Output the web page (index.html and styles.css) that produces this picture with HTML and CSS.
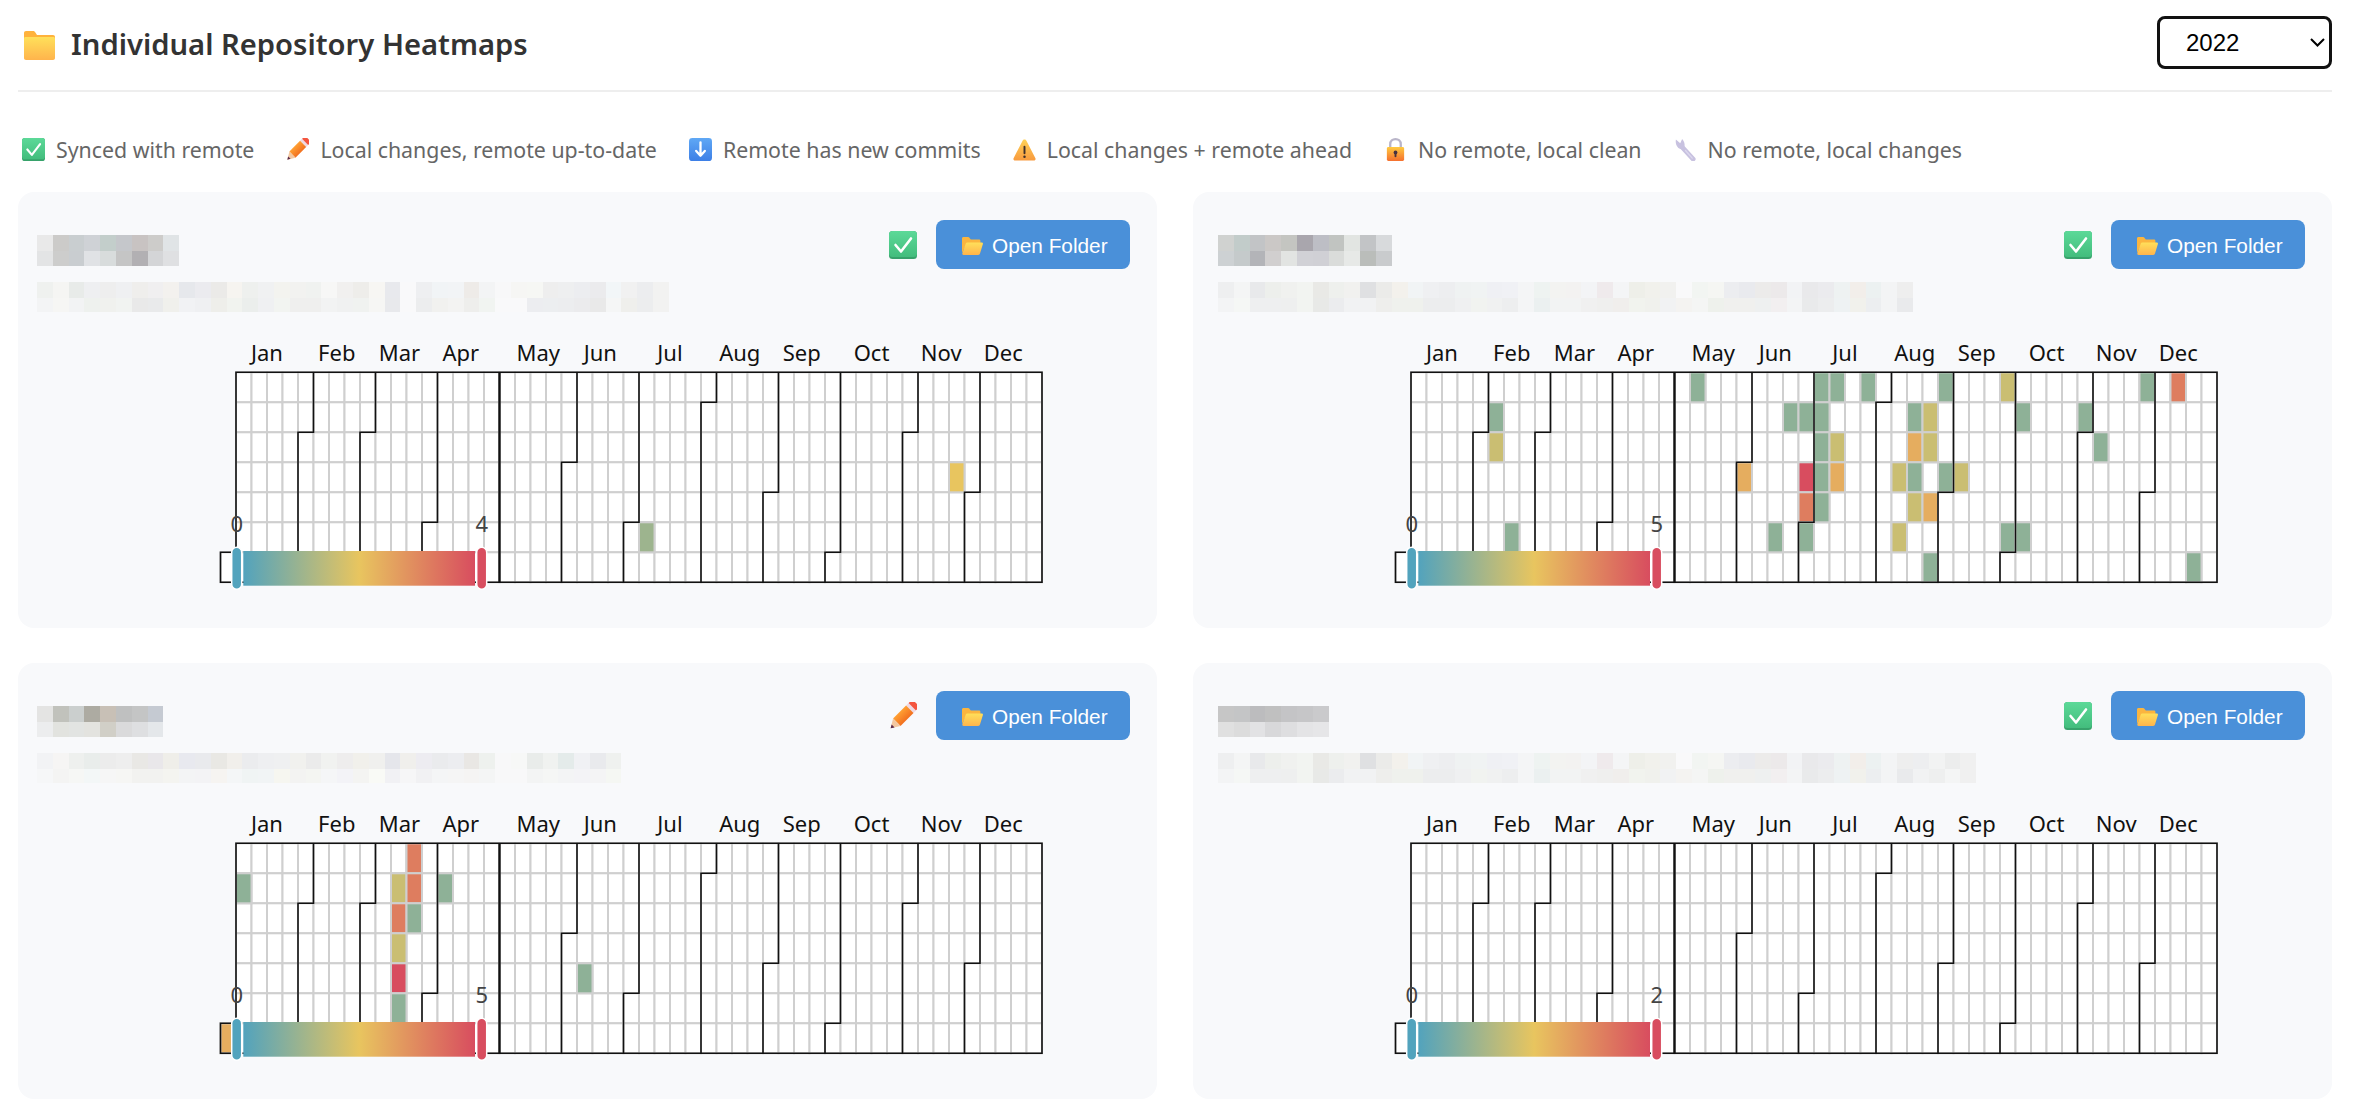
FILE: index.html
```html
<!DOCTYPE html>
<html lang="en">
<head>
    <meta charset="UTF-8">
    <meta name="viewport" content="width=device-width, initial-scale=1.0">
    <title>Individual Repository Heatmaps</title>
    <link rel="stylesheet" href="styles.css">
</head>
<body>
    <svg class="sprite" xmlns="http://www.w3.org/2000/svg">
        <defs>
            <linearGradient id="g-green" x1="0" y1="0" x2="0" y2="1"><stop offset="0" stop-color="#5cd998"/><stop offset="1" stop-color="#43bd7d"/></linearGradient>
            <linearGradient id="g-blue" x1="0" y1="0" x2="0" y2="1"><stop offset="0" stop-color="#5fa8f5"/><stop offset="1" stop-color="#3d7fe6"/></linearGradient>
            <linearGradient id="g-amber" x1="0" y1="0" x2="0" y2="1"><stop offset="0" stop-color="#ffd257"/><stop offset="1" stop-color="#f89a3e"/></linearGradient>
            <linearGradient id="g-lock" x1="0" y1="0" x2="0" y2="1"><stop offset="0" stop-color="#ffc93f"/><stop offset="1" stop-color="#f5702f"/></linearGradient>
            <linearGradient id="g-orange" x1="0" y1="0" x2="1" y2="0"><stop offset="0" stop-color="#ffa033"/><stop offset="1" stop-color="#f2701f"/></linearGradient>
            <linearGradient id="g-folder" x1="0" y1="0" x2="0" y2="1"><stop offset="0" stop-color="#ffe05a"/><stop offset="1" stop-color="#ffb44c"/></linearGradient>
            <linearGradient id="g-scale" x1="0" y1="0" x2="1" y2="0"><stop offset="0" stop-color="#52a3bd"/><stop offset="0.5" stop-color="#e8c55f"/><stop offset="1" stop-color="#d84d5f"/></linearGradient>
        </defs>
        <symbol id="i-check" viewBox="0 0 28 28">
            <rect width="28" height="28" rx="3.5" fill="#37a26b"/>
            <rect width="28" height="26" rx="3.5" fill="url(#g-green)"/>
            <path d="M6.5 14 L12 20.5 L22 7.5" fill="none" stroke="#fff" stroke-width="2.6" stroke-linecap="round" stroke-linejoin="round"/>
        </symbol>
        <symbol id="i-pencil" viewBox="0 0 32 32">
            <g transform="rotate(45 16 16)">
                <rect x="10" y="-5" width="12" height="7" rx="2" fill="#f4553f"/>
                <rect x="10" y="1" width="12" height="4" fill="#efd9e2"/>
                <rect x="10" y="5" width="12" height="21" fill="url(#g-orange)"/>
                <path d="M10 26 H22 L16 36 Z" fill="#f3c7a0"/>
                <path d="M13.6 32 H18.4 L16 36 Z" fill="#5a2a4a"/>
            </g>
        </symbol>
        <symbol id="i-down" viewBox="0 0 24 24">
            <rect width="24" height="24" rx="3.5" fill="url(#g-blue)"/>
            <path d="M12 4.5 V18 M7.5 13.5 L12 18.5 L16.5 13.5" fill="none" stroke="#fff" stroke-width="2.4" stroke-linecap="round" stroke-linejoin="round"/>
        </symbol>
        <symbol id="i-warn" viewBox="0 0 24 24">
            <path d="M12 1.5 C13 1.5 13.6 2 14 2.8 L23.4 21 C24 22.3 23.2 23.5 21.8 23.5 H2.2 C.8 23.5 0 22.3 .6 21 L10 2.8 C10.4 2 11 1.5 12 1.5 Z" fill="url(#g-amber)"/>
            <rect x="11" y="8" width="2" height="9" rx="1" fill="#40302a"/>
            <circle cx="12" cy="19.6" r="1.3" fill="#40302a"/>
        </symbol>
        <symbol id="i-lock" viewBox="0 0 20 24">
            <path d="M4.5 11 V6.5 C4.5 3 7 1.2 10 1.2 C13 1.2 15.5 3 15.5 6.5 V11" fill="none" stroke="#b9b5c9" stroke-width="2.4"/>
            <rect x="1" y="9.5" width="18" height="14.5" rx="1.5" fill="url(#g-lock)"/>
            <circle cx="10" cy="15" r="2" fill="#4a3340"/>
            <rect x="9" y="15" width="2" height="5" rx="1" fill="#4a3340"/>
        </symbol>
        <symbol id="i-wrench" viewBox="0 0 24 24">
            <path d="M9 10 L20 22" fill="none" stroke="#c8c2e0" stroke-width="5" stroke-linecap="round"/>
            <path d="M2 1.5 L6.5 5.5 L8.5 1 C10.5 3 11.8 6.5 10.8 9.5 C10 12 7.5 12 5.5 11 C3 9.5 1.2 5.5 2 1.5 Z" fill="#c8c2e0"/>
            <path d="M12 13 L19 21" fill="none" stroke="#dcd8ee" stroke-width="1.4" stroke-linecap="round"/>
        </symbol>
        <symbol id="i-folder" viewBox="0 0 31 29">
            <path d="M0 2 C0 .8 .8 0 2 0 H9 C10 0 10.6 .4 11.2 1.2 L13 4 H29 C30.2 4 31 4.8 31 6 V12 H0 Z" fill="#ffb23c"/>
            <path d="M0 7.5 C0 6.6 .6 6 1.5 6 H29.5 C30.4 6 31 6.6 31 7.5 V27 C31 28.2 30.2 29 29 29 H2 C.8 29 0 28.2 0 27 Z" fill="url(#g-folder)"/>
        </symbol>
        <symbol id="i-open" viewBox="0 0 21 18">
            <path d="M0 1.5 C0 .6 .6 0 1.5 0 H6 C6.8 0 7.2 .3 7.6 .9 L8.8 2.6 H17 C17.9 2.6 18.4 3.2 18.4 4 V8 H4 L0 16 Z" fill="#fbb53f"/>
            <path d="M3.8 6.4 C4 5.8 4.5 5.4 5.2 5.4 H19.6 C20.6 5.4 21.2 6.2 20.9 7.1 L18 16.6 C17.8 17.4 17.2 18 16.2 18 H1.5 C.6 18 0 17.2 .3 16.4 Z" fill="url(#g-folder)"/>
        </symbol>
    </svg>

    <div class="page">
        <header class="page-head">
            <h1 class="page-title">
                <svg class="title-icon"><use href="#i-folder"/></svg>
                <span class="title-text">Individual Repository Heatmaps</span>
            </h1>
            <select class="year-select">
                <option>2022</option>
                <option>2023</option>
                <option>2024</option>
            </select>
        </header>

        <div class="legend">
            <span class="legend-item"><svg class="legend-icon"><use href="#i-check"/></svg>Synced with remote</span>
            <span class="legend-item"><svg class="legend-icon"><use href="#i-pencil"/></svg>Local changes, remote up-to-date</span>
            <span class="legend-item"><svg class="legend-icon"><use href="#i-down"/></svg>Remote has new commits</span>
            <span class="legend-item"><svg class="legend-icon"><use href="#i-warn"/></svg>Local changes + remote ahead</span>
            <span class="legend-item"><svg class="legend-icon"><use href="#i-lock"/></svg>No remote, local clean</span>
            <span class="legend-item"><svg class="legend-icon"><use href="#i-wrench"/></svg>No remote, local changes</span>
        </div>

        <div class="repo-grid">
            <section class="repo-card">
                <div class="repo-head">
                    <div class="repo-info"><div class="blur blur-name"></div><div class="blur blur-path"></div></div>
                    <div class="repo-actions">
                        <svg class="status-icon"><use href="#i-check"/></svg>
                        <button class="open-btn"><svg class="btn-icon"><use href="#i-open"/></svg>Open Folder</button>
                    </div>
                </div>
                <svg class="heatmap" width="1060" height="270" xmlns="http://www.w3.org/2000/svg"></svg>
            </section>
            <section class="repo-card">
                <div class="repo-head">
                    <div class="repo-info"><div class="blur blur-name"></div><div class="blur blur-path"></div></div>
                    <div class="repo-actions">
                        <svg class="status-icon"><use href="#i-check"/></svg>
                        <button class="open-btn"><svg class="btn-icon"><use href="#i-open"/></svg>Open Folder</button>
                    </div>
                </div>
                <svg class="heatmap" width="1060" height="270" xmlns="http://www.w3.org/2000/svg"></svg>
            </section>
            <section class="repo-card">
                <div class="repo-head">
                    <div class="repo-info"><div class="blur blur-name"></div><div class="blur blur-path"></div></div>
                    <div class="repo-actions">
                        <svg class="status-icon"><use href="#i-pencil"/></svg>
                        <button class="open-btn"><svg class="btn-icon"><use href="#i-open"/></svg>Open Folder</button>
                    </div>
                </div>
                <svg class="heatmap" width="1060" height="270" xmlns="http://www.w3.org/2000/svg"></svg>
            </section>
            <section class="repo-card">
                <div class="repo-head">
                    <div class="repo-info"><div class="blur blur-name"></div><div class="blur blur-path"></div></div>
                    <div class="repo-actions">
                        <svg class="status-icon"><use href="#i-check"/></svg>
                        <button class="open-btn"><svg class="btn-icon"><use href="#i-open"/></svg>Open Folder</button>
                    </div>
                </div>
                <svg class="heatmap" width="1060" height="270" xmlns="http://www.w3.org/2000/svg"></svg>
            </section>
        </div>
    </div>

    <script src="heatmap.js"></script>
</body>
</html>
```

FILE: styles.css
```css
body {
    font-family: "Noto Sans", Arial, sans-serif;
    margin: 0;
    padding: 16px 24px 0 18px;
    background-color: #fff;
}
.sprite {
    display: block;
    width: 0;
    height: 0;
    overflow: hidden;
}
.page-head {
    display: flex;
    justify-content: space-between;
    align-items: flex-start;
    padding: 0 0 21px 6px;
    border-bottom: 2px solid #eee;
}
.page-title {
    display: flex;
    align-items: center;
    gap: 16px;
    margin: 15px 0 0;
    height: 29px;
    font-size: 29.2px;
    font-weight: 600;
    color: #333;
}
.title-text {
    margin-bottom: 4px;
}
.title-icon {
    width: 31px;
    height: 29px;
}
.year-select {
    appearance: none;
    width: 175px;
    height: 53px;
    padding: 0 0 0 26px;
    border: 3px solid #111;
    border-radius: 8px;
    background: #fff url("data:image/svg+xml,%3Csvg xmlns='http://www.w3.org/2000/svg' width='15' height='9'%3E%3Cpath d='M1 1l6.5 6.5L14 1' fill='none' stroke='%23000' stroke-width='2'/%3E%3C/svg%3E") no-repeat right 4px center;
    color: #000;
    font-family: "Liberation Sans", Arial, sans-serif;
    font-size: 24px;
}
.legend {
    display: flex;
    gap: 32px;
    margin: 46px 0 31px;
    padding-left: 4px;
    height: 23px;
}
.legend-item {
    display: flex;
    align-items: center;
    gap: 11px;
    font-size: 21.33px;
    color: #666;
    white-space: nowrap;
}
.legend-icon {
    width: 23px;
    height: 23px;
}
.repo-grid {
    display: grid;
    grid-template-columns: 1139px 1139px;
    column-gap: 36px;
    row-gap: 35px;
}
.repo-card {
    padding: 28px 27px 28px 19px;
    background: #f8f9fb;
    border-radius: 16px;
}
.repo-head {
    display: flex;
    justify-content: space-between;
    align-items: flex-start;
    height: 92px;
}
.repo-info {
    padding-top: 15px;
}
.repo-card:nth-child(even) .repo-info {
    padding-left: 6px;
}
.blur {
    display: grid;
    grid-auto-flow: column;
    grid-auto-columns: 15.8px;
    width: max-content;
}
.blur-name {
    grid-template-rows: 16px 15px;
    margin-bottom: 16px;
}
.blur-path {
    grid-template-rows: 16px 14px;
}
.repo-actions {
    display: flex;
    align-items: center;
    gap: 19px;
}
.status-icon {
    width: 28px;
    height: 28px;
}
.open-btn {
    display: flex;
    align-items: center;
    gap: 9px;
    width: 194px;
    height: 49px;
    padding: 3px 0 0 26px;
    background: #4a90d9;
    color: #fff;
    border: none;
    border-radius: 8px;
    cursor: pointer;
    font-family: "Liberation Sans", Arial, sans-serif;
    font-size: 20.8px;
}
.btn-icon {
    width: 21px;
    height: 18px;
}
.open-btn:hover {
    background: #3f82c9;
}
.heatmap {
    display: block;
    margin-top: 18px;
}
.heatmap text {
    font-family: "Noto Sans", Arial, sans-serif;
    font-size: 22px;
    text-anchor: middle;
}
.month-label {
    fill: #111;
}
.scale-label {
    fill: #444;
}
.cell {
    stroke: #cfcfcf;
    stroke-width: 2;
}
.month-line {
    fill: none;
    stroke: #111;
    stroke-width: 1.6;
}
.quarter-line {
    fill: none;
    stroke: #111;
    stroke-width: 2.4;
}
.scale-handle {
    stroke: #fff;
    stroke-width: 1.5;
}
```

FILE: heatmap.js
```js
const COL = 15.5, ROW = 30, X0 = 199, Y0 = 42.3;

// [label, week the label is centred on]
const MONTHS = [["Jan", 2], ["Feb", 6.5], ["Mar", 10.55], ["Apr", 14.5], ["May", 19.5], ["Jun", 23.5],
    ["Jul", 28], ["Aug", 32.5], ["Sep", 36.5], ["Oct", 41], ["Nov", 45.5], ["Dec", 49.5]];

// month boundaries as [upper week, lower week, row of the step]
const BOUNDS = [[5, 4, 2], [9, 8, 2], [13, 12, 5], [22, 21, 3], [26, 25, 5],
    [31, 30, 1], [35, 34, 4], [39, 38, 6], [44, 43, 2], [48, 47, 4]];

const T2 = "eeeff0 f4f5f5 e8e9eb edefec f0f1ef f2f4f1 e9e9e6 eef0ed f1f1ef dfe0e2 ebebe9 f3f1ec f1f4f5 eff0f2 edeef0 eff2f2 f0f3f3 eff0f4 f0f1f5 f4f5f6 eef3f1 f3f3f1 f3f2f1 f3f4f6 efeaec f4f5f6 eeefe9 f1f1ec f1f1ef f9f9fa f2f5f2 f5f6f3 ecedf0 e9eaee ecebea ece9ea f2f3f5 e9e9eb ebebee eef2f2 f2eeea ecf1f1 f3f4f5 eeeeee";
const B2 = "f3f4f5 f5f7f5 eeeff0 eeeff0 eeefef f2f4f1 e8e9e7 ebecee f1f2f3 f1f2f3 eeeeec eff1ed eff1ed ecedee ecedee eff0f1 f1f3f0 f0f1f1 edeeef f4f5f6 ebf0f0 f2f3f3 f2f3f3 f0f0f0 efefee f0eeec f1f3ee f0f1ed f1f2f3 f4f3f1 f4f5f4 eef1ec f0f0ee f0f0ee eef0f0 f2eff0 f3f4f5 e9eaeb ecedee eef2f3 f1f1ec eceef0 f3f4f5 e9eaec";

const REPOS = [
    {
        max: 4,
        name: ["e9e9e9 cccbc9 c9ced0 cfd2d6 c3cecb c5c7cb c8c3c2 cdccca e0e4e6", "e3e4e5 cdcdcc c9cdd0 e0e2e5 d8dcdc c5c5c5 b2b0b3 d4d5d7 dfe0e2"],
        path: ["eff1ef f5f5f3 e8ebe9 eeeff1 eeeeee eff0f2 efeeec f0eff0 f3f1ee e6e8ec ebebef ebeae8 f6f4f0 eef0ee f0f1f2 f3f3ef f2f2f0 f0f2f0 f7f7f6 f1f0ef eeedea f7f6f3 e8e9ed f9f9fa eeeff1 f1f4f6 f2f4f6 eeebe8 f3f4f5 f8f8f9 f6f6f4 f6f7f4 eeeeee eeeff0 ecedf0 ebebed f2f6f8 f1f1f1 ecedef f2f2f1",
               "f3f4f5 f6f6f4 f2f3f4 eef1ee f0f1ee f1f3f1 e9e9e9 e9eaeb f0f0ec f1f2f4 eff0f2 eeeeea f1f3ef ebeeec eff0f2 f2f4f1 efefee efefee f2f3f3 f0f1f1 f0f2f0 f6f6f4 e8e9ec f9f9fa ecedee f1f1ef f3f3f2 eeeeec f1f4f1 f9f9fa f9f9fa ecedf0 eceef0 ecedef ebebed e9e9e9 f5f6f6 efefec ecedee f2f2f1"],
        cells: [[26, 5, 1], [46, 3, 2]]
    },
    {
        max: 5,
        name: ["d0d2d0 c2ccca c2c4c6 cbc8c6 c4c5c1 a9a6ad bdbec5 c1c4c1 e2e5e2 c2c4c6 d8dadc", "cdd1d3 c5cacb b3b4b8 d1cfcf e2e4e2 d1d1d6 d0d0d5 dadcda e7e9e7 babdba c9cbcd"],
        path: [T2, B2],
        cells: [[5, 1, 1], [5, 2, 2], [6, 5, 1], [18, 0, 1], [21, 3, 3], [23, 5, 1], [24, 1, 1],
            [25, 1, 1], [25, 3, 5], [25, 4, 4], [25, 5, 1], [26, 0, 1], [26, 1, 1], [26, 2, 1], [26, 3, 1], [26, 4, 1],
            [27, 0, 1], [27, 2, 2], [27, 3, 3], [29, 0, 1], [31, 3, 2], [31, 5, 2],
            [32, 1, 1], [32, 2, 3], [32, 3, 1], [32, 4, 2], [33, 1, 2], [33, 2, 2], [33, 4, 3], [33, 6, 1],
            [34, 0, 1], [34, 3, 1], [35, 3, 2], [38, 0, 2], [38, 5, 1], [39, 1, 1], [39, 5, 1],
            [43, 1, 1], [44, 2, 1], [47, 0, 1], [49, 0, 4], [50, 6, 1]]
    },
    {
        max: 5,
        name: ["e4e4e3 c1c2bc cbcfce adaba2 c8c0b6 bfc0c0 c4c5c5 c5cad2", "ecedee e2e3df e2e4e2 e3e3df d1cfc7 dadadb dedfe1 e4e7ea"],
        path: ["f2f3f5 f6f5f4 eef0ee e9edeb ececec eeeeee e9e8e5 e9e7ea efeee9 e8e9ef e9eaed e9e8e4 f1efeb ebecee eeeff1 eff0f1 f1f1ee ebebeb f1f2f0 eeeded f1f0eb f0f0ee e5e6eb f0efec edecf1 eaebed ecedf0 e9e7e4 eef1ee f8f8f9 f7f8f7 e9ecea f0f2f0 e4ebea f0f1f4 e9eaed eff1ef",
               "f6f7f8 f4f4f3 f6f7f5 f3f7f7 f6f6f6 f6f6f4 f2f2f0 f2f2f0 f4f4f0 f3f4f5 f3f3f5 f6f4f1 f4f6f7 f0f4f4 f1f4f5 f6f6f0 f3f3f2 f4f5f2 f5f6f7 f3f3f7 f4f4f2 f9faf6 f1f1f4 f6f6f7 f1f1f3 f4f5f6 f5f5f5 f5f4f3 f4f5f5 f8f8f9 f8f8f9 f3f4f4 f5f6f5 f3f4f5 f3f3f6 f4f4f5 f5f7f3"],
        cells: [[-1, 6, 3], [0, 1, 1], [10, 1, 2], [10, 2, 4], [10, 3, 2], [10, 4, 5], [10, 5, 1],
            [11, 0, 4], [11, 1, 4], [11, 2, 1], [13, 1, 1], [22, 4, 1]]
    },
    {
        max: 2,
        name: ["c6c6c6 c4c5c6 bcbcbe c0c0c0 c4c4c6 c6c6c8 cacacc", "e0e0e0 dcdcdc e2e2e4 d8d8da dedee0 e4e4e6 e6e6e8"],
        path: [T2 + " edeef0 f2f3f3 eceded f0f0f0", B2 + " f1f2f3 eeefef f4f5f5 f0f0f0"],
        cells: []
    }
];

function cellColor(t) {
    const blue = [82, 163, 189], yellow = [232, 197, 95], red = [216, 77, 95];
    const from = t < 0.5 ? blue : yellow;
    const to = t < 0.5 ? yellow : red;
    const f = t < 0.5 ? t * 2 : (t - 0.5) * 2;
    const c = from.map((v, i) => Math.round(v + (to[i] - v) * f));
    return "rgb(" + c.join(",") + ")";
}

function px(week) { return X0 + week * COL; }
function py(row) { return Y0 + row * ROW; }

function fillBlur(el, rows) {
    const top = rows[0].split(" ");
    const bottom = rows[1].split(" ");
    let html = "";
    top.forEach((c, i) => {
        html += '<span style="background:#' + c + '"></span><span style="background:#' + bottom[i] + '"></span>';
    });
    el.innerHTML = html;
}

function drawHeatmap(svg, repo) {
    let html = "";
    const rect = (w, r, fill) => '<rect class="cell" x="' + px(w) + '" y="' + py(r) + '" width="' + COL + '" height="' + ROW + '" fill="' + fill + '"/>';

    MONTHS.forEach(m => {
        html += '<text class="month-label" x="' + px(m[1]) + '" y="31">' + m[0] + '</text>';
    });

    for (let w = 0; w < 52; w++) {
        for (let r = 0; r < 7; r++) html += rect(w, r, "#fff");
    }
    html += rect(-1, 6, "#fff");
    repo.cells.forEach(c => {
        html += rect(c[0], c[1], cellColor(c[2] / repo.max));
    });

    let d = "M" + px(0) + " " + py(6) + "V" + py(0) + "H" + px(52) + "V" + py(7) + "H" + px(-1) + "V" + py(6) + "H" + px(0);
    BOUNDS.forEach(b => {
        d += "M" + px(b[0]) + " " + py(0) + "V" + py(b[2]) + "H" + px(b[1]) + "V" + py(7);
    });
    html += '<path class="month-line" d="' + d + '"/>';
    html += '<path class="quarter-line" d="M' + px(17) + " " + py(0) + "V" + py(7) + '"/>';

    html += '<text class="scale-label" x="199.7" y="201.7">0</text>';
    html += '<text class="scale-label" x="444.7" y="201.7">' + repo.max + '</text>';
    html += '<rect x="206.3" y="221" width="231.7" height="34.7" fill="url(#g-scale)"/>';
    html += '<rect class="scale-handle" x="194.7" y="217.3" width="10" height="42" rx="5" fill="#52a3bd"/>';
    html += '<rect class="scale-handle" x="439.7" y="217.3" width="10" height="42" rx="5" fill="#d84d5f"/>';
    svg.innerHTML = html;
}

document.querySelectorAll(".repo-card").forEach((card, i) => {
    fillBlur(card.querySelector(".blur-name"), REPOS[i].name);
    fillBlur(card.querySelector(".blur-path"), REPOS[i].path);
    drawHeatmap(card.querySelector(".heatmap"), REPOS[i]);
});
```
